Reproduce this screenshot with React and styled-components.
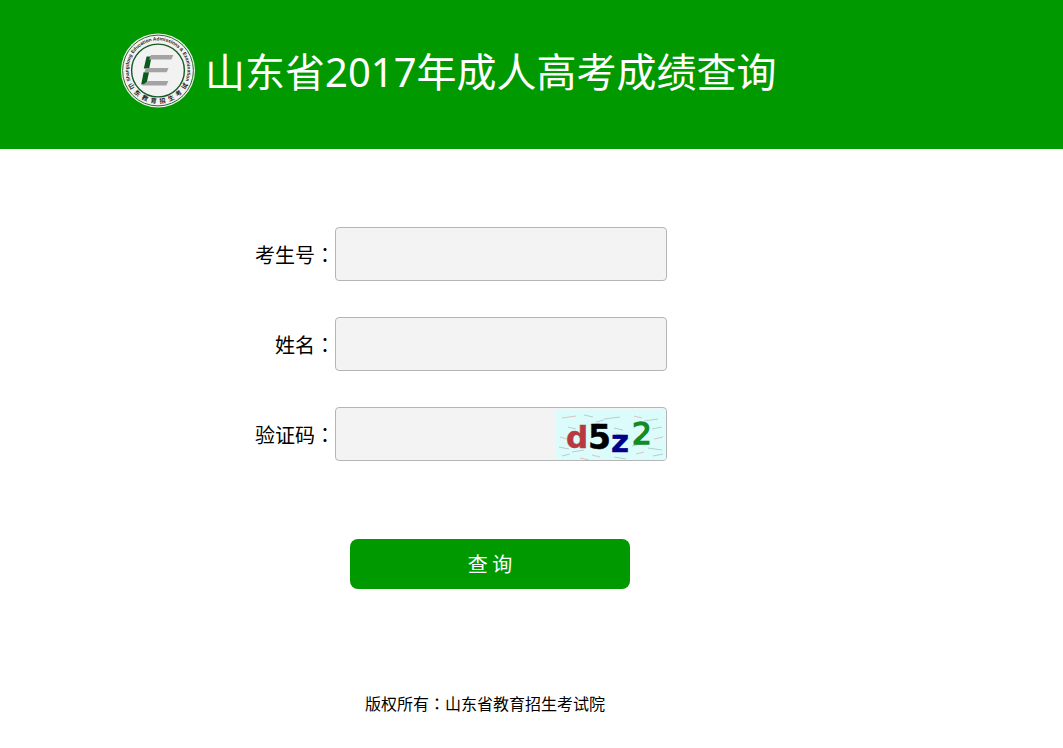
import React,{useState} from 'react'
import styled, { createGlobalStyle } from 'styled-components'

const noise = [
  [6,8,14],[28,5,9],[48,9,16],[78,6,8],[88,11,14],[12,17,8],[34,15,10],[58,18,9],[96,19,10],
  [4,27,7],[40,12,8],[60,24,12],[98,29,9],[3,37,10],[16,42,12],[36,45,8],[76,36,10],[92,38,14],
  [80,44,8],[58,47,12],[97,46,10],[24,48,9],[6,46,8]
]

const Logo = () => (
  <svg width="76" height="76" viewBox="0 0 76 76" role="img" aria-label="山东省教育招生考试院">
    <defs>
      <path id="ringTop" d="M 12.9 53.4 A 29.5 29.5 0 1 1 63.1 53.4" />
      <path id="ringBottom" d="M 5.6 46 A 33.4 33.4 0 0 0 70.4 46" />
    </defs>
    <circle cx="38" cy="38.5" r="37" fill="#f2f2f2" />
    <circle cx="38" cy="38.5" r="35.4" fill="none" stroke="#2c6c2c" strokeWidth="1" />
    <circle cx="38" cy="38.5" r="26.4" fill="none" stroke="#145a22" strokeWidth="1.4" />
    <path d="M26.6 24.5h5l-2.4 12h-5.4zM23.6 40.2h5.4l-2.6 12.3h-5.2z" fill="#0a5a1b" />
    <path d="M31 23h22.4l-2 4.4H29zM26 36h22.6l-2 4.2H24.4zM28 49h20.4l-2 4.6H22z" fill="#a3a3a3" />
    <RingText fontSize="4.8">
      <textPath href="#ringTop" startOffset="50%" textAnchor="middle">Shangdong Education Admissions &amp; Examination</textPath>
    </RingText>
    <RingText fontSize="6.2">
      <textPath href="#ringBottom" startOffset="50%" textAnchor="middle">山  东  教  育  招  生  考  试</textPath>
    </RingText>
  </svg>
)

const CaptchaImage = () => (
  <svg width="110" height="50" viewBox="0 0 110 50" aria-hidden="true">
    <rect width="110" height="50" fill="#dcfcfc" />
    {noise.map(([x, y, w], i) => (
      <path key={i} d={`M${x} ${y}l${w} ${i % 2 ? 2 : -2}`} stroke={i % 3 ? "#b4cfcb" : "#e0bfc2"} strokeWidth="1" />
    ))}
    <CodeText x="10" y="38" fontSize="31" fill="#b83a40" stroke="#b83a40">d</CodeText>
    <CodeText x="32" y="39" fontSize="33" fill="#000000" stroke="#000000">5</CodeText>
    <CodeText x="55" y="42" fontSize="31" fill="#00008b" stroke="#00008b">z</CodeText>
    <CodeText x="76" y="34" fontSize="31" fill="#138a28" stroke="#138a28" $thin>2</CodeText>
  </svg>
)

export default function App() {
    const [number, setNumber] = useState("")
    const [name, setName] = useState("")
    const [code, setCode] = useState("")

    return (
      <Page lang="zh-CN">
      <GlobalStyle />
      <Header>
        <Logo />
        <Title>山东省2017年成人高考成绩查询</Title>
      </Header>

      <Form onSubmit={(e) => e.preventDefault()}>
        <Row>
          <Label htmlFor="number">考生号<Colon lang="zh-TW">：</Colon></Label>
          <Field>
            <Input id="number" type="text" value={number} onChange={(e) => setNumber(e.target.value)}/>
          </Field>
        </Row>
        <Row>
          <Label htmlFor="name">姓名<Colon lang="zh-TW">：</Colon></Label>
          <Field>
            <Input id="name" type="text" value={name} onChange={(e) => setName(e.target.value)}/>
          </Field>
        </Row>
        <Row>
          <Label htmlFor="code">验证码<Colon lang="zh-TW">：</Colon></Label>
          <Field>
            <Input id="code" type="text" value={code} onChange={(e) => setCode(e.target.value)}/>
            <CaptchaButton type="button" aria-label="验证码">
              <CaptchaImage />
            </CaptchaButton>
          </Field>
        </Row>
        <SubmitButton type="submit">查 询</SubmitButton>
      </Form>

      <Footer>版权所有<Colon lang="zh-TW">：</Colon>山东省教育招生考试院</Footer>
      </Page>
    )
}



const GlobalStyle = createGlobalStyle`
  body {
    margin: 0;
    background-color: #ffffff;
  }
`;

const Page = styled.div`
  font-family: "Noto Sans CJK SC", sans-serif;
  color: #000000;
`;

const Header = styled.header`
  display: flex;
  align-items: flex-end;
  gap: 9px;
  padding: 32px 120px 41px;
  background-color: #009900;
`;

const Title = styled.h1`
  margin: 0;
  font-family: "Noto Sans", "Noto Sans CJK SC", sans-serif;
  font-size: 40px;
  font-weight: normal;
  line-height: 72px;
  color: #ffffff;
`;

const RingText = styled.text`
  font-family: "Liberation Sans", "Noto Sans CJK SC", sans-serif;
  font-weight: bold;
  white-space: pre;
  fill: #222222;
`;

const CodeText = styled.text`
  font-family: "DejaVu Sans", sans-serif;
  font-weight: ${(props) => (props.$thin ? "normal" : "bold")};
  stroke-width: ${(props) => (props.$thin ? 1.5 : 0.5)};
`;

const Form = styled.form`
  display: flex;
  flex-direction: column;
  gap: 36px;
  max-width: 970px;
  padding-top: 78px;
`;

const Row = styled.div`
  display: grid;
  grid-template-columns: 335px minmax(0, 332px);
  align-items: center;
`;

const Label = styled.label`
  padding-top: 2px;
  font-size: 20px;
  line-height: 30px;
  text-align: right;
`;

const Colon = styled.span`
  font-family: "Noto Sans CJK TC", sans-serif;
`;

const Field = styled.div`
  display: flex;
  align-items: flex-end;
  box-sizing: border-box;
  height: 54px;
  border: 1px solid #b5b5b5;
  border-radius: 4px;
  background-color: #f3f3f3;
  overflow: hidden;
`;

const Input = styled.input`
  flex: 1;
  min-width: 0;
  height: 100%;
  box-sizing: border-box;
  padding: 0 10px;
  border: none;
  outline: none;
  background: transparent;
  font-family: inherit;
  font-size: 20px;
`;

const CaptchaButton = styled.button`
  display: flex;
  padding: 0;
  border: none;
  background: none;
  cursor: pointer;
`;

const SubmitButton = styled.button`
  width: 280px;
  height: 50px;
  margin: 42px 0 0 350px;
  padding: 0 0 2px;
  border: none;
  border-radius: 8px;
  background-color: #009900;
  color: #ffffff;
  font-family: inherit;
  font-size: 20px;
  cursor: pointer;
`;

const Footer = styled.footer`
  max-width: 970px;
  padding: 102px 0 32px;
  font-size: 16px;
  line-height: 24px;
  text-align: center;
`;
